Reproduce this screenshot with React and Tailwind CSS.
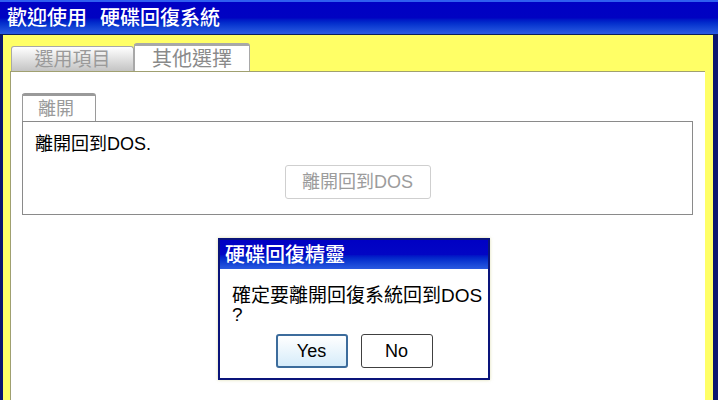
export default function App() {
  const font = { fontFamily: '"Liberation Sans Narrow", "Liberation Sans", "Noto Sans CJK TC", sans-serif' };
  return (
    <div style={font} className="relative w-[718px] h-[400px] overflow-hidden bg-[#0b1670] flex flex-col">
      {/* Title bar */}
      <div className="h-[34px] shrink-0 border-t-2 border-[#2f5ef0] bg-gradient-to-b from-[#0000c4] via-[#0002c2] to-[#2c5ce2] flex items-center pl-[7px] text-white text-[20px] leading-none font-medium">
        <span>歡迎使用</span>
        <span className="ml-[13px]">硬碟回復系統</span>
      </div>
      <div className="h-px shrink-0 bg-[#0a1e5e]" />
      {/* Body */}
      <div className="flex-1 flex flex-col ml-[3px] mr-[5px] bg-[#ffff66] pl-[7px] pr-[8px] pt-[8px]">
        {/* Tabs */}
        <div className="flex items-end h-[28px] shrink-0">
          <div className="ml-[1px] w-[123px] h-[25px] border border-b-0 border-[#a8a8a8] rounded-t-[3px] bg-gradient-to-b from-[#ffffff] to-[#c4c4c4] flex items-center justify-center text-[19px] text-[#9a9a9a] leading-none">
            選用項目
          </div>
          <div className="w-[116px] h-[28px] border-t-[3px] border-x border-[#a8a8a8] rounded-t-[3px] bg-white flex items-center justify-center text-[20px] text-[#8a8a8a] leading-none">
            其他選擇
          </div>
        </div>
        {/* Content */}
        <div className="flex-1 bg-white border-l border-t border-[#a0a070] pl-[11px] pt-[21px]">
          <div className="w-[74px] h-[29px] border-t-[3px] border-x border-[#9a9a9a] rounded-t-[3px] flex items-center pl-[15px] text-[18px] text-[#9a9a9a] leading-none">
            離開
          </div>
          <div className="w-[671px] h-[94px] border border-[#8a8a8a] -mt-px flex flex-col">
            <div className="pl-[12px] pt-[13px] text-[18px] text-black leading-none">離開回到DOS.</div>
            <div className="flex justify-center mt-[12px]">
              <div className="w-[146px] h-[34px] border border-[#cfcfcf] rounded-[3px] flex items-center justify-center text-[18px] text-[#9c9c9c] leading-none">
                離開回到DOS
              </div>
            </div>
          </div>
        </div>
      </div>

      {/* Dialog */}
      <div className="absolute left-[218px] top-[238px] w-[272px] h-[142px] border-2 border-[#0a147a] bg-white flex flex-col shadow-[0_0_3px_rgba(200,200,120,0.6)]">
        <div className="h-[29px] shrink-0 bg-gradient-to-b from-[#0000c4] via-[#0206c4] to-[#2a5ae0] flex items-center pl-[5px] text-white text-[20px] leading-none font-medium">
          硬碟回復精靈
        </div>
        <div className="pl-[12px] pt-[17px] text-[19px] text-black leading-[19px]">
          <div>確定要離開回復系統回到DOS</div>
          <div>?</div>
        </div>
        <div className="flex justify-center gap-[13px] mt-[10px]">
          <div className="w-[72px] h-[34px] border-2 border-[#3c6c9c] rounded-[3px] bg-gradient-to-b from-[#ffffff] to-[#d6ecfa] flex items-center justify-center text-[18px] text-black leading-none">
            Yes
          </div>
          <div className="w-[72px] h-[34px] border border-[#404040] rounded-[3px] bg-white flex items-center justify-center text-[18px] text-black leading-none">
            No
          </div>
        </div>
      </div>
    </div>
  );
}
